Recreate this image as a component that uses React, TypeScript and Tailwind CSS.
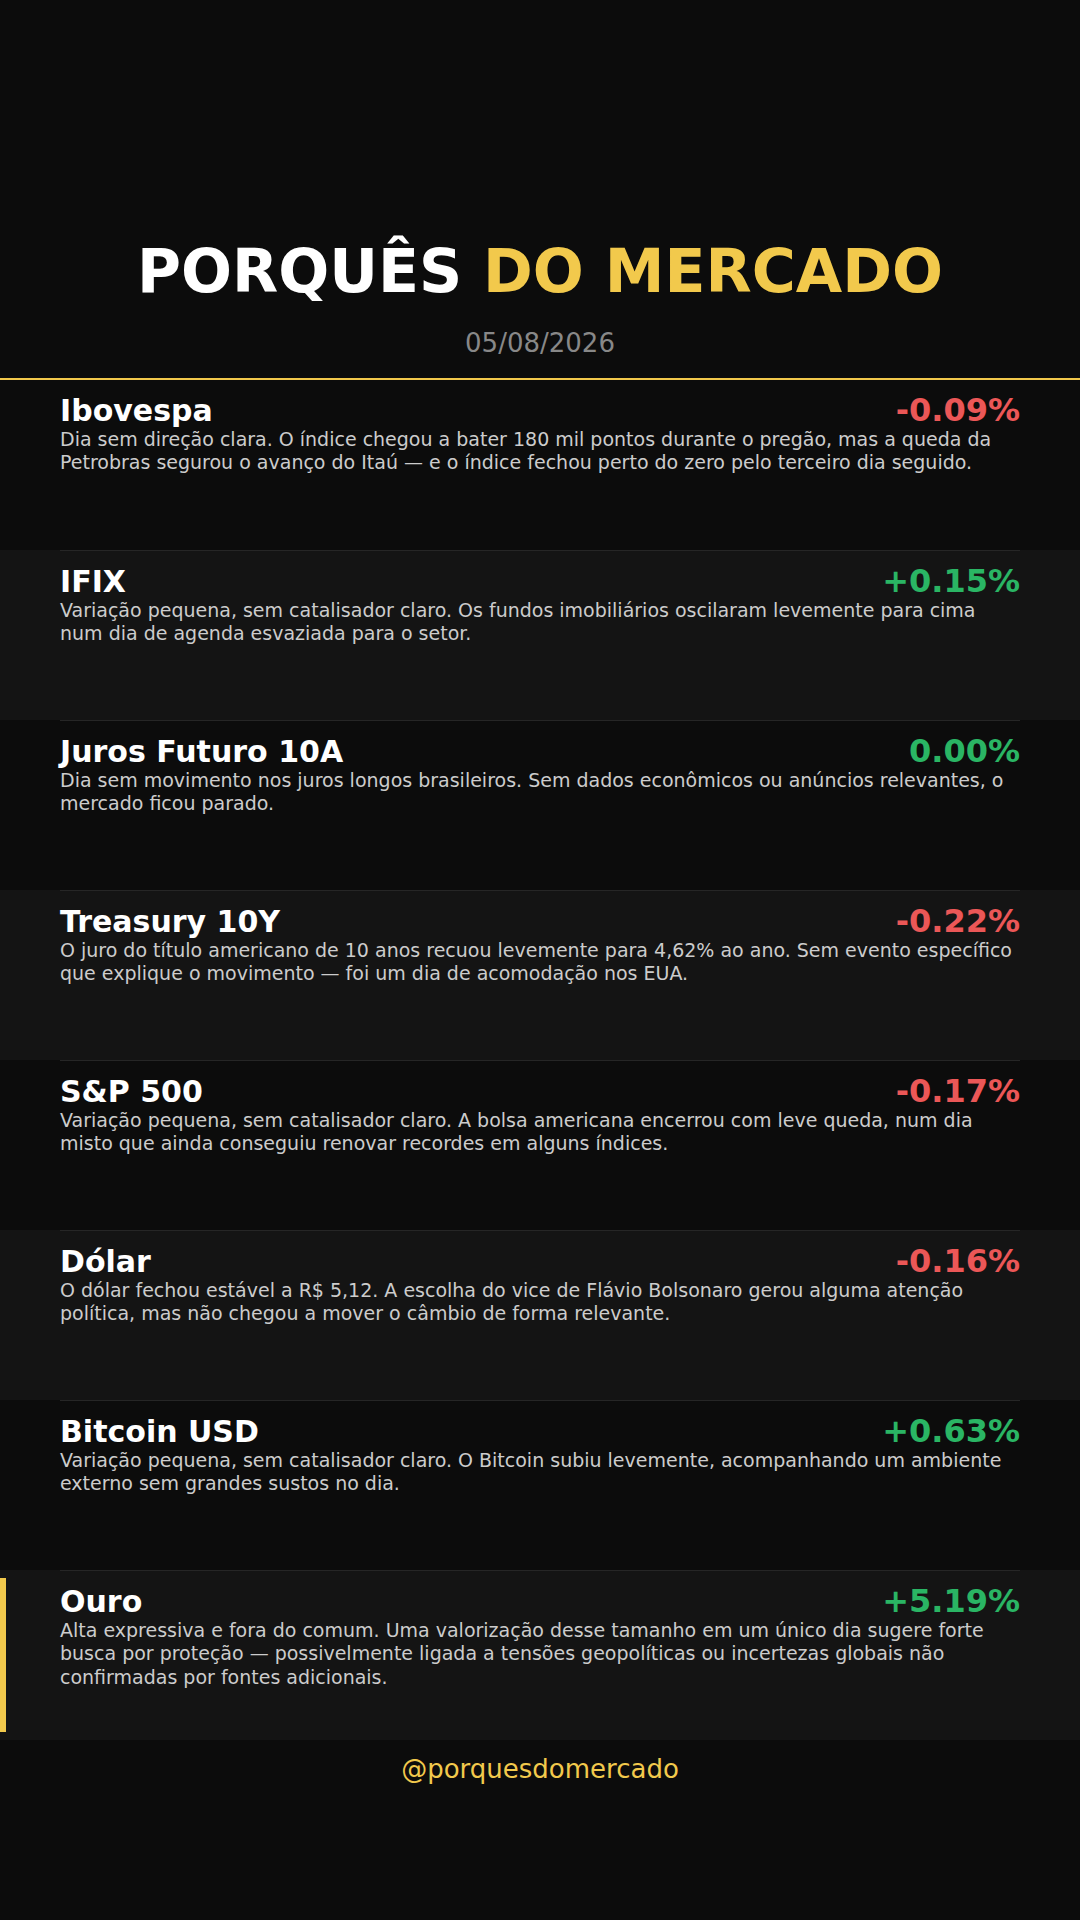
const items = [
  {
    name: "Ibovespa",
    pct: "-0.09%",
    up: false,
    text: "Dia sem direção clara. O índice chegou a bater 180 mil pontos durante o pregão, mas a queda da Petrobras segurou o avanço do Itaú — e o índice fechou perto do zero pelo terceiro dia seguido.",
  },
  {
    name: "IFIX",
    pct: "+0.15%",
    up: true,
    text: "Variação pequena, sem catalisador claro. Os fundos imobiliários oscilaram levemente para cima num dia de agenda esvaziada para o setor.",
  },
  {
    name: "Juros Futuro 10A",
    pct: "0.00%",
    up: true,
    text: "Dia sem movimento nos juros longos brasileiros. Sem dados econômicos ou anúncios relevantes, o mercado ficou parado.",
  },
  {
    name: "Treasury 10Y",
    pct: "-0.22%",
    up: false,
    text: "O juro do título americano de 10 anos recuou levemente para 4,62% ao ano. Sem evento específico que explique o movimento — foi um dia de acomodação nos EUA.",
  },
  {
    name: "S&P 500",
    pct: "-0.17%",
    up: false,
    text: "Variação pequena, sem catalisador claro. A bolsa americana encerrou com leve queda, num dia misto que ainda conseguiu renovar recordes em alguns índices.",
  },
  {
    name: "Dólar",
    pct: "-0.16%",
    up: false,
    text: "O dólar fechou estável a R$ 5,12. A escolha do vice de Flávio Bolsonaro gerou alguma atenção política, mas não chegou a mover o câmbio de forma relevante.",
  },
  {
    name: "Bitcoin USD",
    pct: "+0.63%",
    up: true,
    text: "Variação pequena, sem catalisador claro. O Bitcoin subiu levemente, acompanhando um ambiente externo sem grandes sustos no dia.",
  },
  {
    name: "Ouro",
    pct: "+5.19%",
    up: true,
    highlight: true,
    text: "Alta expressiva e fora do comum. Uma valorização desse tamanho em um único dia sugere forte busca por proteção — possivelmente ligada a tensões geopolíticas ou incertezas globais não confirmadas por fontes adicionais.",
  },
];

function Row({ item, index }: { item: (typeof items)[number]; index: number }) {
  const odd = index % 2 === 1;
  return (
    <div className={`flex h-[170px] w-full ${odd ? "bg-[#141414]" : "bg-[#0c0c0c]"}`}>
      <div className="w-[6px] shrink-0 py-2">
        {item.highlight && <div className="h-full w-full bg-[#f2c94c]" />}
      </div>
      <div
        className={`ml-[54px] mr-[60px] flex-1 pt-[12px] ${
          index === 0 ? "" : "border-t border-[#262626]"
        }`}
      >
        <div className="flex h-[36px] items-baseline justify-between">
          <p className="text-[30px] font-bold leading-[36px] text-white">{item.name}</p>
          <p
            className={`text-[32px] font-bold leading-[36px] ${
              item.up ? "text-[#2ab564]" : "text-[#eb5757]"
            }`}
          >
            {item.pct}
          </p>
        </div>
        <p className="text-[19px] leading-[23.4px] text-[#cccccc]">{item.text}</p>
      </div>
    </div>
  );
}

export default function App() {
  return (
    <div
      className="w-[1080px] h-[1920px] bg-[#0c0c0c] flex flex-col"
      style={{ fontFamily: '"DejaVu Sans", "Noto Sans", sans-serif' }}
    >
      <div className="h-[380px] shrink-0 flex flex-col items-center justify-end pb-[15px] border-b-2 border-[#f2c94c]">
        <h1 className="text-[60px] font-bold leading-[72px] text-white">
          PORQUÊS <span className="text-[#f2c94c]">DO MERCADO</span>
        </h1>
        <p className="mt-[17px] text-[26px] leading-[39px] text-[#888888]">05/08/2026</p>
      </div>
      <div className="flex flex-col">
        {items.map((item, index) => (
          <Row key={item.name} item={item} index={index} />
        ))}
      </div>
      <p className="pt-[10px] text-center text-[26px] leading-[39px] text-[#f2c94c]">@porquesdomercado</p>
    </div>
  );
}
